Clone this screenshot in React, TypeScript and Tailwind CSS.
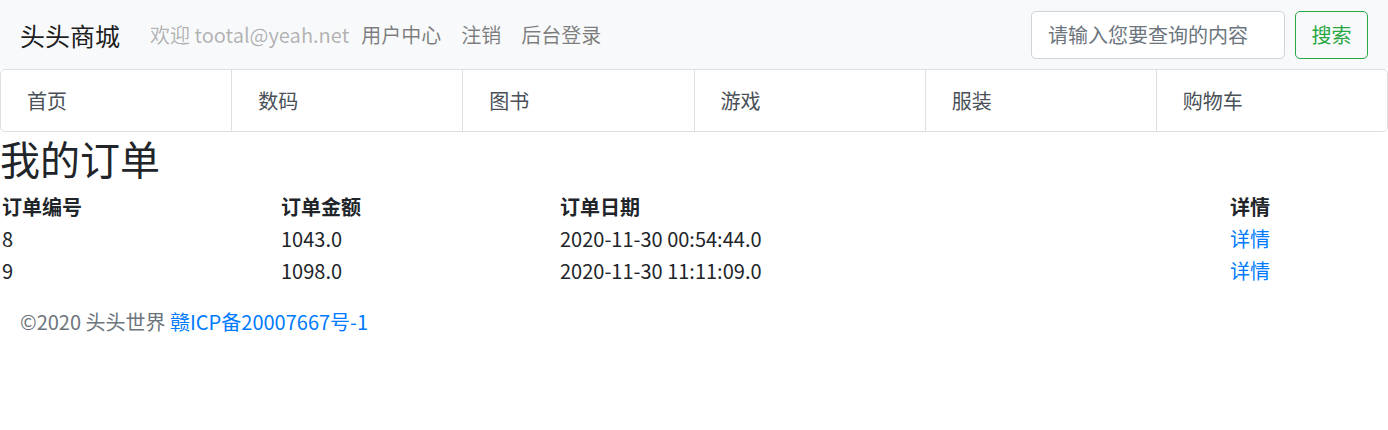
export default function App() {
  const font = { fontFamily: '"Noto Sans CJK SC", "Noto Sans", sans-serif' };
  const navs = ["首页", "数码", "图书", "游戏", "服装", "购物车"];
  const rows = [
    ["8", "1043.0", "2020-11-30 00:54:44.0"],
    ["9", "1098.0", "2020-11-30 11:11:09.0"],
  ];
  return (
    <div className="w-[1388px] bg-white text-[#212529] text-[20px]" style={font}>
      <div className="h-[69px] bg-[#f8f9fa] flex items-center px-[20px]">
        <span className="text-[25px] text-[#000000e6] mr-[30px] leading-[32px]">头头商城</span>
        <span className="text-[#0000004d] mr-[12px]">欢迎 tootal@yeah.net</span>
        <span className="text-[#00000080] mr-[20px]">用户中心</span>
        <span className="text-[#00000080] mr-[20px]">注销</span>
        <span className="text-[#00000080]">后台登录</span>
        <div className="ml-auto flex items-center gap-[10px]">
          <div className="w-[254px] h-[48px] border border-[#ced4da] rounded-[5px] bg-white flex items-center px-[16px] text-[#6c757d] text-[20px]">
            请输入您要查询的内容
          </div>
          <div className="w-[73px] h-[48px] border border-[#28a745] rounded-[5px] flex items-center justify-center text-[#28a745] text-[20px]">
            搜索
          </div>
        </div>
      </div>
      <div className="flex w-[1388px] h-[63px] border border-[#00000020] rounded-[5px]">
        {navs.map((n, i) => (
          <div
            key={n}
            className={`flex-1 flex items-center pl-[26px] text-[#495057] text-[20px] ${i > 0 ? "border-l border-[#00000020]" : ""}`}
          >
            {n}
          </div>
        ))}
      </div>
      <h1 className="text-[40px] leading-[48px] font-normal mt-[2px]">我的订单</h1>
      <div className="mt-[9px] text-[20px] pl-[2px]">
        <div className="grid grid-cols-[279px_279px_670px_158px] h-[32px] items-center font-bold">
          <div>订单编号</div>
          <div>订单金额</div>
          <div>订单日期</div>
          <div>详情</div>
        </div>
        {rows.map((r) => (
          <div key={r[0]} className="grid grid-cols-[279px_279px_670px_158px] h-[32px] items-center">
            <div>{r[0]}</div>
            <div>{r[1]}</div>
            <div>{r[2]}</div>
            <div className="text-[#007bff]">详情</div>
          </div>
        ))}
      </div>
      <div className="px-[20px] mt-[20px] text-[#6c757d] text-[20px] leading-[30px]">
        ©2020 头头世界 <span className="text-[#007bff]">赣ICP备20007667号-1</span>
      </div>
    </div>
  );
}
